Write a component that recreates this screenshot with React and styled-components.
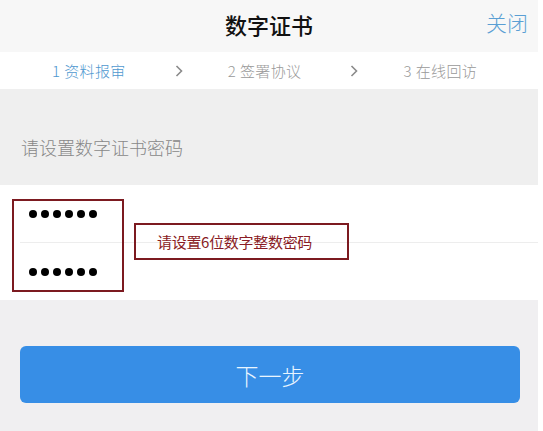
import React from "react";
import styled, { createGlobalStyle } from "styled-components";

const GlobalStyle = createGlobalStyle`
  body {
    margin: 0;
    background: #fff;
    font-family: "Noto Sans CJK SC", "Noto Sans", sans-serif;
  }
`;

const Page = styled.div`
  width: 538px;
  height: 431px;
  display: flex;
  flex-direction: column;
  background: #f0eff1;
`;

const NavBar = styled.header`
  position: relative;
  flex: none;
  height: 52px;
  display: flex;
  align-items: center;
  justify-content: center;
  background: #f7f7f7;
`;

const Title = styled.h1`
  margin: -5px 0 0;
  font-size: 22px;
  font-weight: 500;
  color: #111;
  line-height: 1;
`;

const CloseLink = styled.span`
  position: absolute;
  right: 10px;
  top: 12px;
  font-size: 21px;
  font-weight: 300;
  line-height: 1;
  color: #5a9fd4;
`;

const StepBar = styled.nav`
  flex: none;
  height: 37px;
  display: flex;
  align-items: center;
  padding-left: 52px;
  background: #fff;
  font-size: 15px;
  font-weight: 300;
`;

const Step = styled.span`
  color: ${(p) => (p.$active ? "#4f98cf" : "#999")};
  margin-right: ${(p) => p.$after}px;
  letter-spacing: 0.4px;
  white-space: nowrap;
`;

const Chevron = styled.svg`
  width: 8px;
  height: 12px;
  margin-right: ${(p) => p.$after}px;
`;

const Hint = styled.div`
  flex: none;
  height: 96px;
  box-sizing: border-box;
  display: flex;
  align-items: flex-end;
  padding: 0 0 25px 21px;
  font-size: 18px;
  font-weight: 300;
  color: #888;
  background: #efefef;
`;

const Fields = styled.section`
  position: relative;
  flex: none;
  display: flex;
  flex-direction: column;
  background: #fff;
`;

const FieldRow = styled.div`
  height: ${(p) => p.$h}px;
  display: flex;
  align-items: center;
  padding-left: 29px;
`;

const Divider = styled.div`
  height: 1px;
  margin-left: 20px;
  background: #ededed;
`;

const Dots = styled.div`
  display: flex;
  gap: 4px;
`;

const Dot = styled.i`
  width: 8px;
  height: 8px;
  border-radius: 50%;
  background: #000;
`;

const MarkBox = styled.div`
  position: absolute;
  left: ${(p) => p.$x}px;
  top: ${(p) => p.$y}px;
  width: ${(p) => p.$w}px;
  height: ${(p) => p.$h}px;
  box-sizing: border-box;
  border: 2px solid #7c1a20;
`;

const MarkNote = styled(MarkBox)`
  display: flex;
  align-items: center;
  padding-left: 21px;
  font-size: 15px;
  letter-spacing: -0.3px;
  color: #8a1c24;
`;

const Footer = styled.div`
  flex: 1;
  padding: 46px 18px 0 20px;
`;

const NextButton = styled.button`
  width: 100%;
  height: 57px;
  border: 0;
  border-radius: 6px;
  background: #378ee6;
  color: #e9f5ff;
  font-family: inherit;
  font-size: 23px;
  font-weight: 300;
`;

const ChevronIcon = ({ after }) => (
  <Chevron $after={after} viewBox="0 0 8 12">
    <path d="M1.5 1 L6.5 6 L1.5 11" fill="none" stroke="#8a8a8a" strokeWidth="1.6" />
  </Chevron>
);

const PasswordDots = () => (
  <Dots>
    {Array.from({ length: 6 }).map((_, i) => (
      <Dot key={i} />
    ))}
  </Dots>
);

export default function App() {
  return (
    <>
      <GlobalStyle />
      <Page>
        <NavBar>
          <Title>数字证书</Title>
          <CloseLink>关闭</CloseLink>
        </NavBar>
        <StepBar>
          <Step $active $after={49}>1 资料报审</Step>
          <ChevronIcon after={45} />
          <Step $after={48}>2 签署协议</Step>
          <ChevronIcon after={46} />
          <Step>3 在线回访</Step>
        </StepBar>
        <Hint>请设置数字证书密码</Hint>
        <Fields>
          <FieldRow $h={57}>
            <PasswordDots />
          </FieldRow>
          <Divider />
          <FieldRow $h={57}>
            <PasswordDots />
          </FieldRow>
          <MarkBox $x={12} $y={14} $w={112} $h={93} />
          <MarkNote $x={134} $y={38} $w={215} $h={37}>
            请设置6位数字整数密码
          </MarkNote>
        </Fields>
        <Footer>
          <NextButton>下一步</NextButton>
        </Footer>
      </Page>
    </>
  );
}
